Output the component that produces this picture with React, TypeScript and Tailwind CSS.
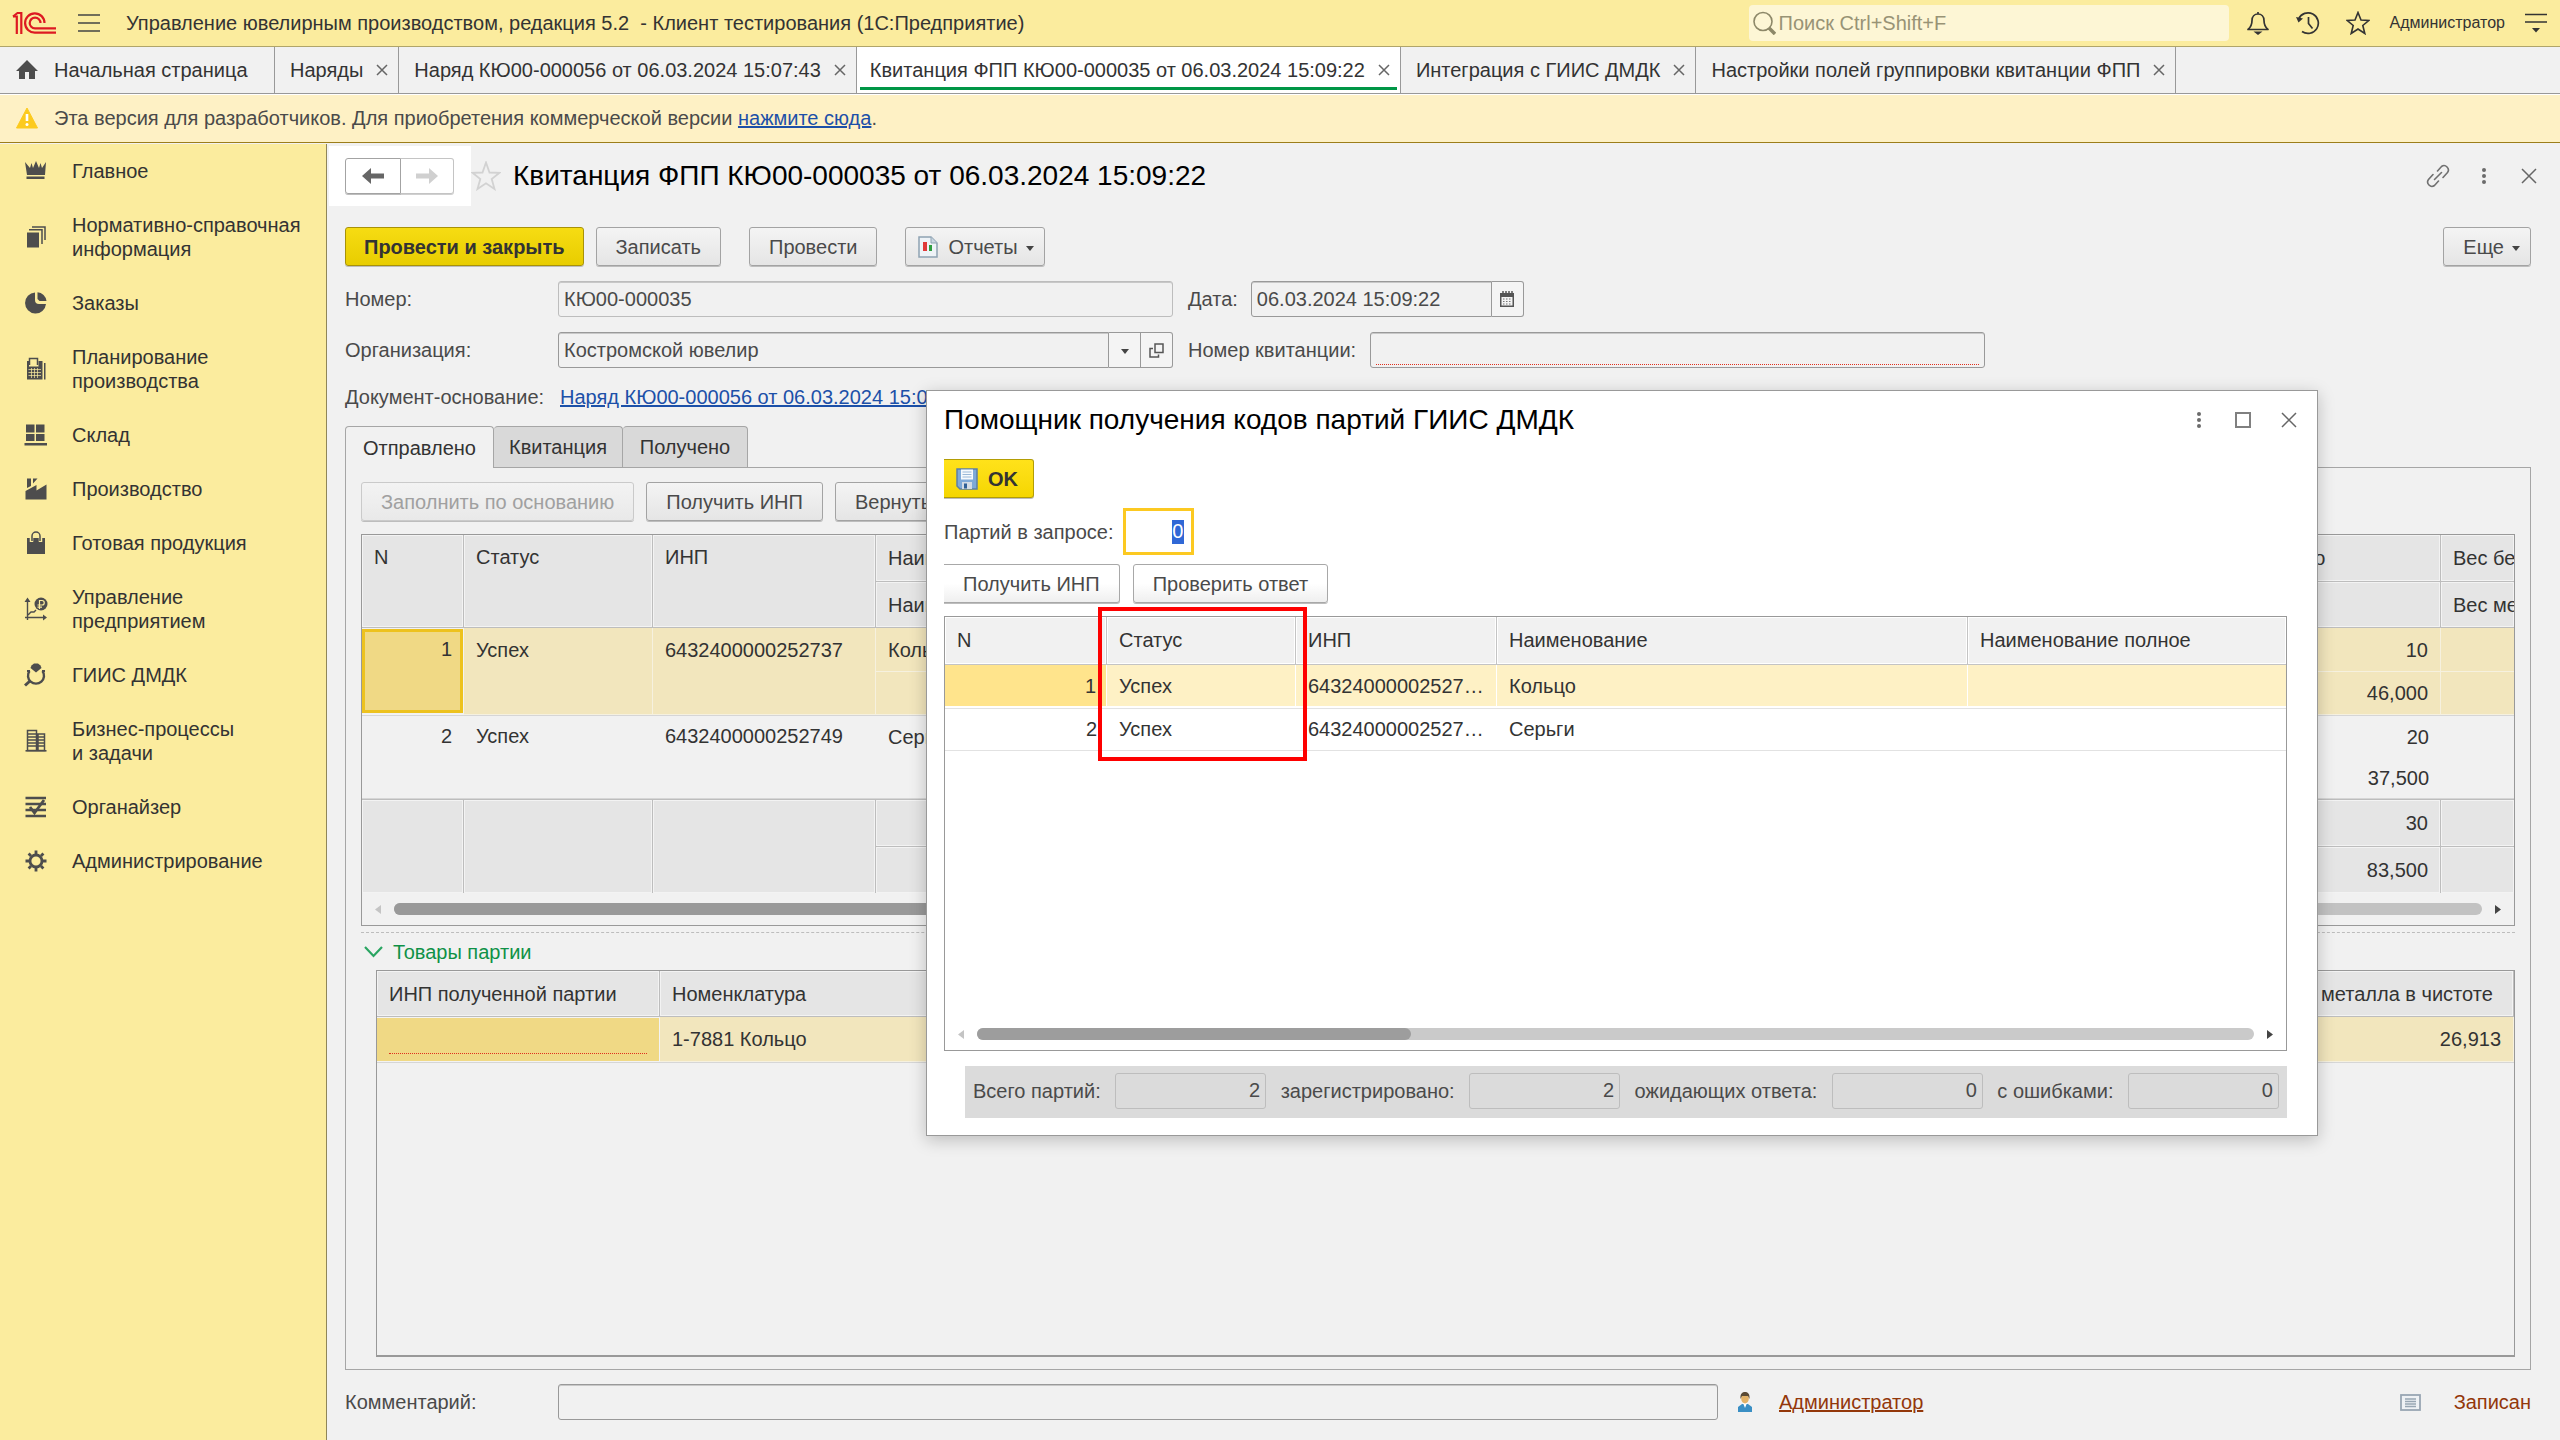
import React from "react";

type SvgProps = { className?: string; children: React.ReactNode; w: number; h: number };

function Svg({ w, h, className = "", children }: SvgProps) {
  return (
    <svg width={w} height={h} viewBox={`0 0 ${w} ${h}`} className={`shrink-0 ${className}`} aria-hidden="true">
      {children}
    </svg>
  );
}

/* ---------- small glyphs ---------- */

const Cross = ({ size }: { size: number }) => (
  <Svg w={size} h={size}>
    <path d={`M1 1 L${size - 1} ${size - 1} M${size - 1} 1 L1 ${size - 1}`} stroke="#666" strokeWidth="1.5" fill="none" />
  </Svg>
);

const Dots = () => (
  <Svg w={12} h={18}>
    <circle cx="6" cy="3" r="2" fill="#6b6b6b" />
    <circle cx="6" cy="9" r="2" fill="#6b6b6b" />
    <circle cx="6" cy="15" r="2" fill="#6b6b6b" />
  </Svg>
);

const Caret = () => (
  <Svg w={8} h={8}>
    <path d="M0 3 H8 L4 8 Z" fill="#444" />
  </Svg>
);

const Logo = () => (
  <Svg w={44} h={24}>
    <g fill="none" stroke="#dd1a22" strokeWidth="2.2">
      <path d="M1 5.5 H4.8 V23" />
      <path d="M1 5.5 L5.5 2 H9.3 V23" />
      <path d="M32.5 12 A9.7 9.7 0 1 0 23 21.7 H44" />
      <path d="M28.5 12 A5.4 5.4 0 1 0 23 17.4 H44" />
    </g>
  </Svg>
);

const icons: Record<string, React.ReactNode> = {
  crown: (
    <g fill="#4d4d4d">
      <path d="M1 3 L6 9 L7.5 4 L9 9 L12 2 L15 9 L16.500 4 L18 9 L22 3 L21 16 H3 Z" />
      <rect x="2.500" y="17.500" width="18" height="2.500" />
    </g>
  ),
  stack: (
    <g>
      <rect x="3" y="7.500" width="12" height="15" fill="#4d4d4d" />
      <path d="M5 4.800 H18 V19 M8 2 H21 V15" stroke="#4d4d4d" strokeWidth="1.500" fill="none" />
    </g>
  ),
  pie: (
    <g fill="#4d4d4d">
      <path d="M11 1.500 A10.500 10.500 0 1 0 22 13 H15 A4 4 0 0 1 11 9 Z" />
      <path d="M13.500 1.200 A10 10 0 0 1 22.500 10 H15.500 L13.500 8 Z" />
    </g>
  ),
  calc: (
    <g>
      <path d="M5.500 8 V1.500 H13.500 V8" stroke="#4d4d4d" strokeWidth="1.500" fill="none" />
      <path d="M3 4 H5 V9.500 H14.500 V4 H18.500 V22.500 H3 Z" fill="#4d4d4d" />
      <rect x="20" y="6" width="1.500" height="16.500" fill="#4d4d4d" />
      <path d="M4.500 12.500 H17 M4.500 15.500 H17 M4.500 18.500 H17 M7.500 11 V21 M10.500 11 V21 M13.500 11 V21" stroke="#fbec9e" strokeWidth="0.700" />
    </g>
  ),
  boxes: (
    <g fill="#4d4d4d">
      <rect x="2" y="1.500" width="8.500" height="8" />
      <rect x="12" y="1.500" width="8.500" height="8" />
      <rect x="2" y="11" width="8.500" height="7" />
      <rect x="12" y="11" width="8.500" height="7" />
      <rect x="0.500" y="20" width="22.500" height="2.500" />
    </g>
  ),
  factory: (
    <g fill="#4d4d4d">
      <path d="M1.500 14 L12.500 8 V13.500 L22.500 7.500 V22.500 H1.500 Z" />
      <path d="M3 1.500 H7 V9 L3 11 Z M9 1.500 H13.500 L9 6.500 Z" />
    </g>
  ),
  bag: (
    <g>
      <path d="M3 7 H21 V23 H3 Z" fill="#4d4d4d" />
      <path d="M7.500 11 V5 A4.500 4.500 0 0 1 16.500 5 V11" stroke="#fbec9e" strokeWidth="3.500" fill="none" />
      <path d="M8 10 V5 A4 4 0 0 1 16 5 V10" stroke="#4d4d4d" strokeWidth="1.500" fill="none" />
    </g>
  ),
  chart: (
    <g>
      <path d="M3.500 3 V23 M1 20.500 H21" stroke="#4d4d4d" strokeWidth="1.400" />
      <path d="M0.500 5 L3.500 0.500 L6.500 5 Z M19 17.500 L23 20.500 L19 23.500 Z" fill="#4d4d4d" />
      <path d="M4 18 L7 15 H10 L12 13" stroke="#4d4d4d" strokeWidth="1.400" fill="none" />
      <circle cx="17" cy="7" r="6.500" fill="#4d4d4d" />
      <path d="M15.500 12 V3.500 H18 A2.200 2.200 0 0 1 18 8 H13.500 M13.500 10.200 H18" stroke="#fbec9e" strokeWidth="1.200" fill="none" />
    </g>
  ),
  ring: (
    <g>
      <path d="M7.500 2.500 L10 0.500 H14 L16.500 2.500 L17.500 5 L12 9.500 L6.500 5 Z" fill="#4d4d4d" />
      <path d="M5.500 8 A8 8 0 1 0 18.500 8" stroke="#4d4d4d" strokeWidth="2.400" fill="none" />
      <path d="M6.500 17.500 L1 22.500" stroke="#4d4d4d" strokeWidth="3" />
      <path d="M3 8 H6 M18 8 H21" stroke="#4d4d4d" strokeWidth="2" />
    </g>
  ),
  building: (
    <g>
      <path d="M3.500 1.500 H12.500 V21.500 H3.500 Z M14 5 H20.500 V21.500 H14 Z" stroke="#4d4d4d" strokeWidth="1.500" fill="none" />
      <path d="M4 5 H12 M4 8 H12 M4 11 H12 M4 14 H12 M4 17 H12 M14 8 H20 M14 11 H20 M14 14 H20 M14 17 H20" stroke="#4d4d4d" strokeWidth="1.600" />
      <path d="M1.500 21.800 H22.500" stroke="#4d4d4d" strokeWidth="1.600" />
    </g>
  ),
  organizer: (
    <g>
      <path d="M1.500 3 H22 M1.500 9 H22 M1.500 15 H22 M1.500 21 H22" stroke="#4d4d4d" strokeWidth="2.400" />
      <path d="M6 12 L10.500 18 L20 5" stroke="#4d4d4d" strokeWidth="2.800" fill="none" />
    </g>
  ),
  gear: (
    <g>
      <circle cx="12" cy="12" r="6" fill="none" stroke="#4d4d4d" strokeWidth="2.800" />
      <path
        d="M12 1.500 V5 M12 19 V22.500 M1.500 12 H5 M19 12 H22.500 M4.600 4.600 L7 7 M17 17 L19.400 19.400 M4.600 19.400 L7 17 M17 7 L19.400 4.600"
        stroke="#4d4d4d"
        strokeWidth="2.800"
      />
    </g>
  ),
};

/* ---------- shared controls ---------- */

type ButtonProps = {
  children: React.ReactNode;
  primary?: boolean;
  white?: boolean;
  disabled?: boolean;
  className?: string;
};

function Button({ children, primary, white, disabled, className = "" }: ButtonProps) {
  const look = primary
    ? "border-[#a89208] bg-linear-to-b from-[#f6dc12] to-[#e8cd00] font-bold text-[#333] px-[18px]"
    : white
      ? "border-[#a8a8a8] bg-linear-to-b from-white from-50% to-[#efefef] text-[#4a4a4a] px-[19px]"
      : disabled
        ? "border-[#cacaca] bg-linear-to-b from-[#f3f3f3] to-[#e9e9e9] text-[#a0a0a0] px-[19px]"
        : "border-[#a3a3a3] bg-linear-to-b from-[#f4f4f4] to-[#e5e5e5] text-[#4a4a4a] px-[19px]";
  return (
    <button
      type="button"
      disabled={disabled}
      className={`flex h-[39px] shrink-0 items-center justify-center gap-2 whitespace-nowrap rounded-[3px] border shadow-[0_1px_0_#bdbdbd] ${look} ${className}`}
    >
      {children}
    </button>
  );
}

const fieldBox = "h-9 rounded-[3px] border border-[#999] bg-[#f1f1f1] shadow-[inset_0_1px_0_#c8c8c8]";

function NavItem({ icon, children }: { icon: string; children: React.ReactNode }) {
  return (
    <a href="#" className="flex items-center gap-6 py-[15px] pl-6 text-[#333]">
      <Svg w={24} h={24}>{icons[icon]}</Svg>
      <span>{children}</span>
    </a>
  );
}

function WindowTab({ title, active }: { title: string; active?: boolean }) {
  return (
    <div className={`relative flex shrink-0 items-center gap-[13px] border-r border-[#999] pr-[10px] ${active ? "bg-white pl-[13px]" : "bg-[#f1f1f1] pl-[15px]"}`}>
      <a href="#" className="whitespace-nowrap">{title}</a>
      <button type="button" aria-label={`Закрыть ${title}`}>
        <Cross size={12} />
      </button>
      {active && <span className="absolute inset-x-[3px] bottom-[3px] h-[3px] bg-[#009646]" />}
    </div>
  );
}

function ScrollBar({ thumb, dark, light }: { thumb: string; dark: string; light: string }) {
  return (
    <div className="flex h-8 items-center gap-[13px] px-[13px]">
      <Svg w={6} h={9}>
        <path d="M6 0 V9 L0 4.500 Z" fill="#c4c4c4" />
      </Svg>
      <div className={`h-3 flex-1 rounded-full ${light}`}>
        <div className={`h-3 rounded-full ${thumb} ${dark}`} />
      </div>
      <Svg w={6} h={9}>
        <path d="M0 0 V9 L6 4.500 Z" fill="#444" />
      </Svg>
    </div>
  );
}

const th = "overflow-hidden whitespace-nowrap border-b border-r border-[#bdbdbd] bg-[#e5e5e5] px-3 text-left font-normal shadow-[inset_0_0_0_1px_#f3f3f3]";
const sel = "overflow-hidden whitespace-nowrap border-b border-r border-[#f6f1df] bg-[#f2e6bd] px-3";
const plain = "overflow-hidden whitespace-nowrap px-3";

function BatchTable() {
  return (
    <div className="flex flex-col border border-[#999]">
      <table className="w-full table-fixed border-separate border-spacing-0">
        <colgroup>
          <col className="w-[102px]" />
          <col className="w-[189px]" />
          <col className="w-[223px]" />
          <col />
          <col className="w-[235px]" />
          <col className="w-[73px]" />
        </colgroup>
        <thead>
          <tr className="h-[47px]">
            <th rowSpan={2} className={`${th} py-[10px] align-top`}>N</th>
            <th rowSpan={2} className={`${th} py-[10px] align-top`}>Статус</th>
            <th rowSpan={2} className={`${th} py-[10px] align-top`}>ИНП</th>
            <th className={th}>Наименование</th>
            <th className={th}>Количество</th>
            <th className={`${th} border-r-0`}>Вес без камней</th>
          </tr>
          <tr className="h-[46px]">
            <th className={th}>Наименование полное</th>
            <th className={th} />
            <th className={`${th} border-r-0`}>Вес металла</th>
          </tr>
        </thead>
        <tbody>
          <tr className="h-[44px]">
            <td rowSpan={2} className="border-b border-r border-[#f3f3f3] p-0">
              <div className="h-[84px] border-[3px] border-[#edc21e] bg-[#f0d985] px-2 py-[5px] text-right">1</div>
            </td>
            <td rowSpan={2} className={`${sel} py-[10px] align-top`}>Успех</td>
            <td rowSpan={2} className={`${sel} py-[10px] align-top`}>6432400000252737</td>
            <td className={sel}>Кольцо</td>
            <td className={`${sel} text-right`}>10</td>
            <td className={`${sel} border-r-0`} />
          </tr>
          <tr className="h-[43px]">
            <td className={sel} />
            <td className={`${sel} text-right`}>46,000</td>
            <td className={`${sel} border-r-0`} />
          </tr>
          <tr className="h-[42px]">
            <td rowSpan={2} className={`${plain} border-y border-[#d6d6d6] py-2 text-right align-top`}>2</td>
            <td rowSpan={2} className={`${plain} border-y border-[#d6d6d6] py-2 align-top`}>Успех</td>
            <td rowSpan={2} className={`${plain} border-y border-[#d6d6d6] py-2 align-top`}>6432400000252749</td>
            <td className={`${plain} border-t border-[#d6d6d6]`}>Серьги</td>
            <td className={`${plain} border-t border-[#d6d6d6] text-right`}>20</td>
            <td className={`${plain} border-t border-[#d6d6d6]`} />
          </tr>
          <tr className="h-[42px]">
            <td className={`${plain} border-b border-[#d6d6d6]`} />
            <td className={`${plain} border-b border-[#d6d6d6] text-right`}>37,500</td>
            <td className={`${plain} border-b border-[#d6d6d6]`} />
          </tr>
        </tbody>
        <tfoot>
          <tr className="h-[48px]">
            <td rowSpan={2} className={`${th} border-b-0 border-t`} />
            <td rowSpan={2} className={`${th} border-b-0 border-t`} />
            <td rowSpan={2} className={`${th} border-b-0 border-t`} />
            <td className={`${th} border-t`} />
            <td className={`${th} border-t text-right!`}>30</td>
            <td className={`${th} border-r-0 border-t`} />
          </tr>
          <tr className="h-[46px]">
            <td className={`${th} border-b-0`} />
            <td className={`${th} border-b-0 text-right!`}>83,500</td>
            <td className={`${th} border-b-0 border-r-0`} />
          </tr>
        </tfoot>
      </table>
      <ScrollBar thumb="w-[60%]" dark="bg-[#999]" light="bg-[#c2c2c2]" />
    </div>
  );
}

function GoodsTable() {
  return (
    <div className="ml-[15px] flex-1 border border-b-2 border-[#999]">
      <table className="w-full table-fixed border-separate border-spacing-0">
        <colgroup>
          <col className="w-[283px]" />
          <col />
          <col className="w-[245px]" />
        </colgroup>
        <thead>
          <tr className="h-[46px]">
            <th className={th}>ИНП полученной партии</th>
            <th className={th}>Номенклатура</th>
            <th className={th}>Вес металла в чистоте</th>
          </tr>
        </thead>
        <tbody>
          <tr className="h-[45px]">
            <td className="border-y border-r border-[#f3f3f3] bg-[#f0d985] px-3 pb-[7px] align-bottom">
              <div className="border-b border-dotted border-[#e0301e]" />
            </td>
            <td className={sel}>1-7881 Кольцо</td>
            <td className={`${sel} text-right`}>26,913</td>
          </tr>
          <tr>
            <td colSpan={3} className="border-t border-[#d6d6d6] p-0" />
          </tr>
        </tbody>
      </table>
    </div>
  );
}

const dth = "overflow-hidden whitespace-nowrap border-b border-r border-[#c4c4c4] bg-[#f1f1f1] px-3 pb-[2px] text-left font-normal shadow-[inset_0_0_0_1px_#fff]";
const dsel = "overflow-hidden text-ellipsis whitespace-nowrap border-b-2 border-r border-white bg-[#fef1c5] px-3";
const drow = "overflow-hidden text-ellipsis whitespace-nowrap border-y border-[#e2e2e2] px-3 pb-[2px]";

function Counter({ id, label, value }: { id: string; label: string; value: string }) {
  return (
    <>
      <label htmlFor={id} className="shrink-0 whitespace-nowrap">{label}</label>
      <input
        id={id}
        readOnly
        defaultValue={value}
        className="h-9 w-[151px] min-w-0 rounded-[3px] border border-[#bdbdbd] bg-transparent px-[5px] pb-[2px] text-right"
      />
    </>
  );
}

function Dialog() {
  return (
    <section
      role="dialog"
      aria-label="Помощник получения кодов партий ГИИС ДМДК"
      className="absolute left-[599px] right-[242px] top-[246px] flex flex-col border border-[#999] bg-white pb-[17px] pl-[17px] pr-[30px] text-[#4a4a4a] shadow-[0_4px_16px_rgba(0,0,0,0.22)]"
    >
      <header className="flex h-[58px] items-center">
        <h2 className="flex-1 text-[28px] leading-8 text-black">Помощник получения кодов партий ГИИС ДМДК</h2>
        <div className="-mr-[10px] flex items-center gap-[30px]">
          <button type="button" aria-label="Меню"><Dots /></button>
          <button type="button" aria-label="Развернуть" className="size-4 border-2 border-[#808080]" />
          <button type="button" aria-label="Закрыть окно"><Cross size={16} /></button>
        </div>
      </header>

      <div className="mt-[10px] flex">
        <button
          type="button"
          className="flex h-[39px] w-[90px] items-center gap-[10px] rounded-r-[3px] border border-l-0 border-[#b39d05] bg-linear-to-b from-[#ffe21a] to-[#f5d600] pl-3 font-bold text-[#333] shadow-[0_1px_0_#bdbdbd]"
        >
          <Svg w={22} h={22}>
            <path d="M1 1 H21 V21 H4 L1 18 Z" fill="#7ea9d8" stroke="#5c7fa6" strokeWidth="1.500" />
            <rect x="5" y="1.500" width="12" height="10" fill="#f6f9fc" />
            <path d="M6.500 4 H15.500 M6.500 6.500 H15.500 M6.500 9 H15.500" stroke="#9ab8d8" />
            <rect x="6" y="14" width="10" height="7" fill="#d3dbe4" />
            <rect x="8" y="15.500" width="3" height="5" fill="#2f5f96" />
          </Svg>
          OK
        </button>
      </div>

      <div className="mt-[10px] flex items-center gap-[10px]">
        <label htmlFor="batches">Партий в запросе:</label>
        <div className="relative">
          <span className="absolute right-[10px] top-3 h-6 w-3 bg-[#3068d6]" />
          <input
            id="batches"
            defaultValue="0"
            className="relative h-[47px] w-[71px] border-[3px] border-[#fcc921] bg-transparent pr-2 text-right text-white outline-none"
          />
        </div>
      </div>

      <div className="mt-[9px] flex gap-[13px]">
        <Button white className="rounded-l-none border-l-0">Получить ИНП</Button>
        <Button white>Проверить ответ</Button>
      </div>

      <div className="relative mt-[13px] flex h-[435px] flex-col border border-[#999]">
        <table className="w-full table-fixed border-separate border-spacing-0 text-[#333]">
          <colgroup>
            <col className="w-[162px]" />
            <col className="w-[189px]" />
            <col className="w-[201px]" />
            <col className="w-[471px]" />
            <col />
          </colgroup>
          <thead>
            <tr className="h-[48px]">
              <th className={dth}>N</th>
              <th className={dth}>Статус</th>
              <th className={dth}>ИНП</th>
              <th className={dth}>Наименование</th>
              <th className={`${dth} border-r-0`}>Наименование полное</th>
            </tr>
          </thead>
          <tbody>
            <tr className="h-[43px]">
              <td className="border-b-2 border-r border-white bg-[#ffe48c] px-[10px] text-right">1</td>
              <td className={dsel}>Успех</td>
              <td className={dsel}>6432400000252737</td>
              <td className={dsel}>Кольцо</td>
              <td className={`${dsel} border-r-0`} />
            </tr>
            <tr className="h-[43px]">
              <td className="border-y border-[#e2e2e2] px-[10px] pb-[2px] text-right">2</td>
              <td className={drow}>Успех</td>
              <td className={drow}>6432400000252749</td>
              <td className={drow}>Серьги</td>
              <td className={drow} />
            </tr>
          </tbody>
        </table>
        <div className="mt-auto">
          <ScrollBar thumb="w-[34%]" dark="bg-[#9d9d9d]" light="bg-[#cacaca]" />
        </div>
        <div className="pointer-events-none absolute -top-[10px] left-[153px] h-[154px] w-[209px] border-4 border-[#fe0000]" />
      </div>

      <div className="ml-[21px] mt-[15px] flex h-[52px] items-center justify-between bg-[#dbdbdb] px-2 pb-[2px]">
        <Counter id="total" label="Всего партий:" value="2" />
        <Counter id="registered" label="зарегистрировано:" value="2" />
        <Counter id="waiting" label="ожидающих ответа:" value="0" />
        <Counter id="failed" label="с ошибками:" value="0" />
      </div>
    </section>
  );
}

export default function App() {
  return (
    <div className="flex min-h-screen w-full flex-col bg-[#f1f1f1] font-['Liberation_Sans',Arial,sans-serif] text-[20px] leading-6 text-[#4a4a4a]">
      {/* title bar */}
      <header className="flex h-[47px] items-center border-b border-[#b0a56a] bg-[#fbec9e] pl-3 pr-[13px] text-[#333]">
        <Logo />
        <button type="button" aria-label="Главное меню" className="ml-[22px]">
          <Svg w={22} h={18}>
            <path d="M0 1 H22 M0 9 H22 M0 17 H22" stroke="#444" strokeWidth="1.500" />
          </Svg>
        </button>
        <h1 className="ml-[26px] flex-1 whitespace-pre">Управление ювелирным производством, редакция 5.2  - Клиент тестирования (1С:Предприятие)</h1>
        <label className="flex h-9 w-[480px] items-center gap-[3px] rounded-[4px] bg-[#fdf6d5] pl-1">
          <Svg w={23} h={24}>
            <circle cx="10" cy="10.500" r="9" fill="none" stroke="#8d8869" strokeWidth="1.600" />
            <path d="M16 17 L22 23" stroke="#8d8869" strokeWidth="3.500" />
          </Svg>
          <input
            aria-label="Поиск"
            placeholder="Поиск Ctrl+Shift+F"
            className="min-w-0 flex-1 bg-transparent outline-none placeholder:text-[#989375]"
          />
        </label>
        <button type="button" aria-label="Уведомления" className="ml-[17px]">
          <Svg w={24} h={24}>
            <path d="M12 1 V3 M2 18.500 C5 16 6 13 6 9.500 C6 5.500 8.500 3 12 3 C15.500 3 18 5.500 18 9.500 C18 13 19 16 22 18.500 Z" fill="none" stroke="#333" strokeWidth="1.700" strokeLinejoin="round" />
            <path d="M7.500 20.500 H16.500 L12 24 Z" fill="#333" />
          </Svg>
        </button>
        <button type="button" aria-label="История" className="ml-[26px]">
          <Svg w={24} h={24}>
            <path d="M2.600 8 A10.300 10.300 0 1 1 6 20.500" fill="none" stroke="#333" strokeWidth="1.700" />
            <path d="M0 6 L7 7.500 L2.500 11.500 Z" fill="#333" />
            <path d="M12.500 6 V12.500 L16.500 17.500" fill="none" stroke="#333" strokeWidth="1.700" />
          </Svg>
        </button>
        <button type="button" aria-label="Избранное" className="ml-[26px]">
          <Svg w={24} h={24}>
            <path d="M12 1.500 L15 9 L22.800 9.500 L16.800 14.500 L18.800 22.500 L12 18 L5.200 22.500 L7.200 14.500 L1.200 9.500 L9 9 Z" fill="none" stroke="#333" strokeWidth="1.600" />
          </Svg>
        </button>
        <a href="#" className="ml-5 text-base">Администратор</a>
        <button type="button" aria-label="Сервис" className="ml-5">
          <Svg w={22} h={20}>
            <path d="M0 1.500 H22 M0 9 H22" stroke="#333" strokeWidth="1.500" />
            <path d="M7 15 H15 L11 19.500 Z" fill="#333" />
          </Svg>
        </button>
      </header>

      {/* open windows */}
      <nav className="flex h-[47px] items-stretch border-b border-[#999] text-[#333]">
        <a href="#" className="flex w-[275px] shrink-0 items-center gap-4 border-r border-[#999] pl-4">
          <Svg w={22} h={20}>
            <path d="M11 0 L22 11 H19 V19 H13 V12 H9 V19 H3 V11 H0 Z" fill="#4d4d4d" />
          </Svg>
          Начальная страница
        </a>
        <WindowTab title="Наряды" />
        <WindowTab title="Наряд КЮ00-000056 от 06.03.2024 15:07:43" />
        <WindowTab title="Квитанция ФПП КЮ00-000035 от 06.03.2024 15:09:22" active />
        <WindowTab title="Интеграция с ГИИС ДМДК" />
        <WindowTab title="Настройки полей группировки квитанции ФПП" />
      </nav>

      {/* licence notice */}
      <div className="flex h-[49px] items-center gap-4 border-b border-[#9c7e1a] border-t border-t-white bg-[#fef1c5] pb-[2px] pl-4">
        <Svg w={22} h={22}>
          <path d="M11 1 L21.500 21 H0.500 Z" fill="#fcca1e" stroke="#fcca1e" strokeLinejoin="round" />
          <path d="M11 7 V14" stroke="#fff" strokeWidth="2.600" />
          <circle cx="11" cy="17.500" r="1.500" fill="#fff" />
        </Svg>
        <p>
          Эта версия для разработчиков. Для приобретения коммерческой версии{" "}
          <a href="#" className="text-[#1c50a8] underline">нажмите сюда</a>.
        </p>
      </div>

      <div className="mt-px flex flex-1">
        {/* sections */}
        <nav className="flex w-[327px] shrink-0 flex-col border-r border-[#8f8659] bg-[#fbec9e]">
          <NavItem icon="crown">Главное</NavItem>
          <NavItem icon="stack">Нормативно-справочная<br />информация</NavItem>
          <NavItem icon="pie">Заказы</NavItem>
          <NavItem icon="calc">Планирование<br />производства</NavItem>
          <NavItem icon="boxes">Склад</NavItem>
          <NavItem icon="factory">Производство</NavItem>
          <NavItem icon="bag">Готовая продукция</NavItem>
          <NavItem icon="chart">Управление<br />предприятием</NavItem>
          <NavItem icon="ring">ГИИС ДМДК</NavItem>
          <NavItem icon="building">Бизнес-процессы<br />и задачи</NavItem>
          <NavItem icon="organizer">Органайзер</NavItem>
          <NavItem icon="gear">Администрирование</NavItem>
        </nav>

        {/* document form */}
        <main className="relative flex min-w-0 flex-1 flex-col pb-5 pr-[29px]">
          <div className="flex items-center pt-[2px]">
            <div className="ml-[2px] flex h-[60px] w-[142px] items-center bg-white pl-4">
              <button type="button" aria-label="Назад" className="flex h-9 w-[56px] items-center justify-center rounded-l-[3px] border border-[#a3a3a3] shadow-[0_1px_0_#bdbdbd]">
                <Svg w={22} h={16}>
                  <path d="M0 8 L9 0 V5.500 H22 V10.500 H9 V16 Z" fill="#666" />
                </Svg>
              </button>
              <button type="button" aria-label="Вперед" className="flex h-9 w-[53px] items-center justify-center rounded-r-[3px] border border-l-0 border-[#c4c4c4] shadow-[0_1px_0_#d0d0d0]">
                <Svg w={22} h={16}>
                  <path d="M22 8 L13 0 V5.500 H0 V10.500 H13 V16 Z" fill="#d0d0d0" />
                </Svg>
              </button>
            </div>
            <Svg w={30} h={30}>
              <path d="M15 1.500 L18.500 11.500 L28.500 11.800 L20.700 18 L23.500 28 L15 22.300 L6.500 28 L9.300 18 L1.500 11.800 L11.500 11.500 Z" fill="none" stroke="#d2d2d2" strokeWidth="1.800" />
            </Svg>
            <h2 className="ml-3 flex-1 text-[28px] leading-8 text-black">Квитанция ФПП КЮ00-000035 от 06.03.2024 15:09:22</h2>
            <button type="button" aria-label="Ссылка">
              <Svg w={24} h={24}>
                <g fill="none" stroke="#707070" strokeWidth="1.600" strokeLinecap="round">
                  <path d="M11.500 7 L15.500 2.500 A4.300 4.300 0 0 1 21.500 8.500 L17 13.500" />
                  <path d="M12.500 17 L8.500 21.500 A4.300 4.300 0 0 1 2.500 15.500 L7 10.500" />
                  <path d="M8.500 15.500 L15.500 8.500" />
                </g>
              </Svg>
            </button>
            <button type="button" aria-label="Действия" className="ml-7"><Dots /></button>
            <button type="button" aria-label="Закрыть" className="-mr-[6px] ml-[31px]"><Cross size={16} /></button>
          </div>

          <div className="flex flex-1 flex-col pl-[18px]">
            {/* command bar */}
            <div className="mt-[21px] flex">
              <Button primary>Провести и закрыть</Button>
              <Button className="ml-3">Записать</Button>
              <Button className="ml-[28px]">Провести</Button>
              <Button className="ml-[28px] pl-[12px]! pr-[10px]!">
                <Svg w={20} h={22}>
                  <path d="M1 1 H13 L19 7 V21 H1 Z" fill="#eef3f7" stroke="#8fa3b3" strokeWidth="1.500" />
                  <path d="M13 1 V7 H19" fill="#c9d6e0" stroke="#8fa3b3" />
                  <rect x="5" y="6" width="4" height="9" fill="#e03a3a" />
                  <rect x="11" y="9" width="3" height="6" fill="#2f9e41" />
                </Svg>
                <span className="ml-[2px]">Отчеты</span>
                <Caret />
              </Button>
              <Button className="ml-auto pr-[10px]!">
                Еще <Caret />
              </Button>
            </div>

            {/* requisites */}
            <div className="mt-[15px] flex items-center">
              <label htmlFor="number" className="w-[213px] shrink-0">Номер:</label>
              <input id="number" readOnly defaultValue="КЮ00-000035" className={`${fieldBox} w-[615px] border-[#bdbdbd] px-[5px]`} />
              <label htmlFor="date" className="ml-[15px] mr-[13px]">Дата:</label>
              <input id="date" defaultValue="06.03.2024 15:09:22" className={`${fieldBox} w-[241px] rounded-r-none px-[5px]`} />
              <button type="button" aria-label="Выбрать дату" className="flex h-9 w-8 items-center justify-center rounded-r-[3px] border border-l-0 border-[#999] bg-[#f4f4f4]">
                <Svg w={14} h={16}>
                  <path d="M0 2 H14 V16 H0 Z" fill="#555" />
                  <path d="M3 0 V3 M6 0 V3 M9 0 V3 M12 0 V3" stroke="#555" strokeWidth="1.500" />
                  <rect x="1.500" y="6" width="11" height="8.500" fill="#f4f4f4" />
                  <path d="M3 8 H12 M3 10.500 H12 M3 13 H12" stroke="#777" strokeWidth="1.200" strokeDasharray="1.500 1.500" />
                </Svg>
              </button>
            </div>

            <div className="mt-[15px] flex items-center">
              <label htmlFor="organization" className="w-[213px] shrink-0">Организация:</label>
              <input id="organization" defaultValue="Костромской ювелир" className={`${fieldBox} w-[551px] rounded-r-none px-[5px]`} />
              <button type="button" aria-label="Выбрать" className="flex h-9 w-8 items-center justify-center border border-l-0 border-[#999] bg-[#f4f4f4]">
                <Caret />
              </button>
              <button type="button" aria-label="Открыть" className="flex h-9 w-8 items-center justify-center rounded-r-[3px] border border-l-0 border-[#999] bg-[#f4f4f4]">
                <Svg w={15} h={15}>
                  <path d="M6 1 H14 V9.500 H6 Z" fill="none" stroke="#555" strokeWidth="1.500" />
                  <path d="M4 5.500 H1 V14 H9.500 V11.500" fill="none" stroke="#555" strokeWidth="1.500" />
                </Svg>
              </button>
              <label htmlFor="receipt" className="ml-[15px] mr-[14px]">Номер квитанции:</label>
              <div className={`${fieldBox} flex w-[615px] flex-col px-[5px] pb-[2px]`}>
                <input id="receipt" className="min-h-0 w-full flex-1 border-b border-dotted border-[#e0301e] bg-transparent outline-none" />
              </div>
            </div>

            <div className="mt-[17px] flex">
              <span className="w-[215px] shrink-0">Документ-основание:</span>
              <a href="#" className="text-[#1c50a8] underline">Наряд КЮ00-000056 от 06.03.2024 15:07:43</a>
            </div>

            {/* tabs */}
            <div role="tablist" className="relative z-10 mt-[17px] flex text-[#333]">
              <button type="button" role="tab" aria-selected="true" className="h-[42px] w-[149px] rounded-t-[4px] border border-b-0 border-[#a6a6a6] bg-[#f1f1f1]">Отправлено</button>
              <button type="button" role="tab" aria-selected="false" className="h-[41px] w-[129px] rounded-t-[4px] border border-b-0 border-l-0 border-[#a6a6a6] bg-[#d9d9d9]">Квитанция</button>
              <button type="button" role="tab" aria-selected="false" className="h-[41px] w-[125px] rounded-t-[4px] border border-b-0 border-l-0 border-[#a6a6a6] bg-[#d9d9d9]">Получено</button>
            </div>

            <div className="-mt-px flex flex-1 flex-col border border-[#a6a6a6] px-[15px] pb-3 pt-[14px] text-[#333]">
              <div className="mb-[13px] flex gap-3">
                <Button disabled>Заполнить по основанию</Button>
                <Button>Получить ИНП</Button>
                <Button>Вернуть в наряд</Button>
              </div>
              <BatchTable />
              <div className="mt-[6px] border-t border-dashed border-[#bdbdbd]" />
              <button type="button" className="flex h-[37px] items-center gap-[10px] pl-[3px] text-left text-[#0f9147]">
                <Svg w={19} h={12}>
                  <path d="M1 1 L9.500 10 L18 1" fill="none" stroke="#2aa562" strokeWidth="2.200" />
                </Svg>
                Товары партии
              </button>
              <GoodsTable />
            </div>

            {/* footer */}
            <div className="mt-[14px] flex items-center">
              <label htmlFor="comment" className="w-[213px] shrink-0">Комментарий:</label>
              <input id="comment" className={`${fieldBox} w-[1160px] px-[5px]`} />
              <Svg w={16} h={20} className="ml-[19px]">
                <path d="M1 20 V15 L5 12 H11 L15 15 V20 Z" fill="#3a8fc4" />
                <path d="M6 11 H10 L8 16 Z" fill="#fff" />
                <ellipse cx="8" cy="6.500" rx="3.800" ry="5" fill="#e3b267" />
                <path d="M3.500 7 C3 1.500 5.500 0 8 0 C10.500 0 13 1.500 12.500 7 L11 4 H5 Z" fill="#5a4a35" />
              </Svg>
              <a href="#" className="ml-[26px] text-[#93370a] underline">Администратор</a>
              <Svg w={21} h={17} className="ml-auto">
                <rect x="1" y="1" width="19" height="15" fill="#eef1f4" stroke="#98a6b3" strokeWidth="1.800" />
                <path d="M5 5 H16 M5 7.500 H16 M5 10 H16 M5 12.500 H16" stroke="#98a6b3" strokeWidth="1.300" />
              </Svg>
              <span className="ml-[33px] text-[#93370a]">Записан</span>
            </div>
          </div>

          <Dialog />
        </main>
      </div>
    </div>
  );
}
